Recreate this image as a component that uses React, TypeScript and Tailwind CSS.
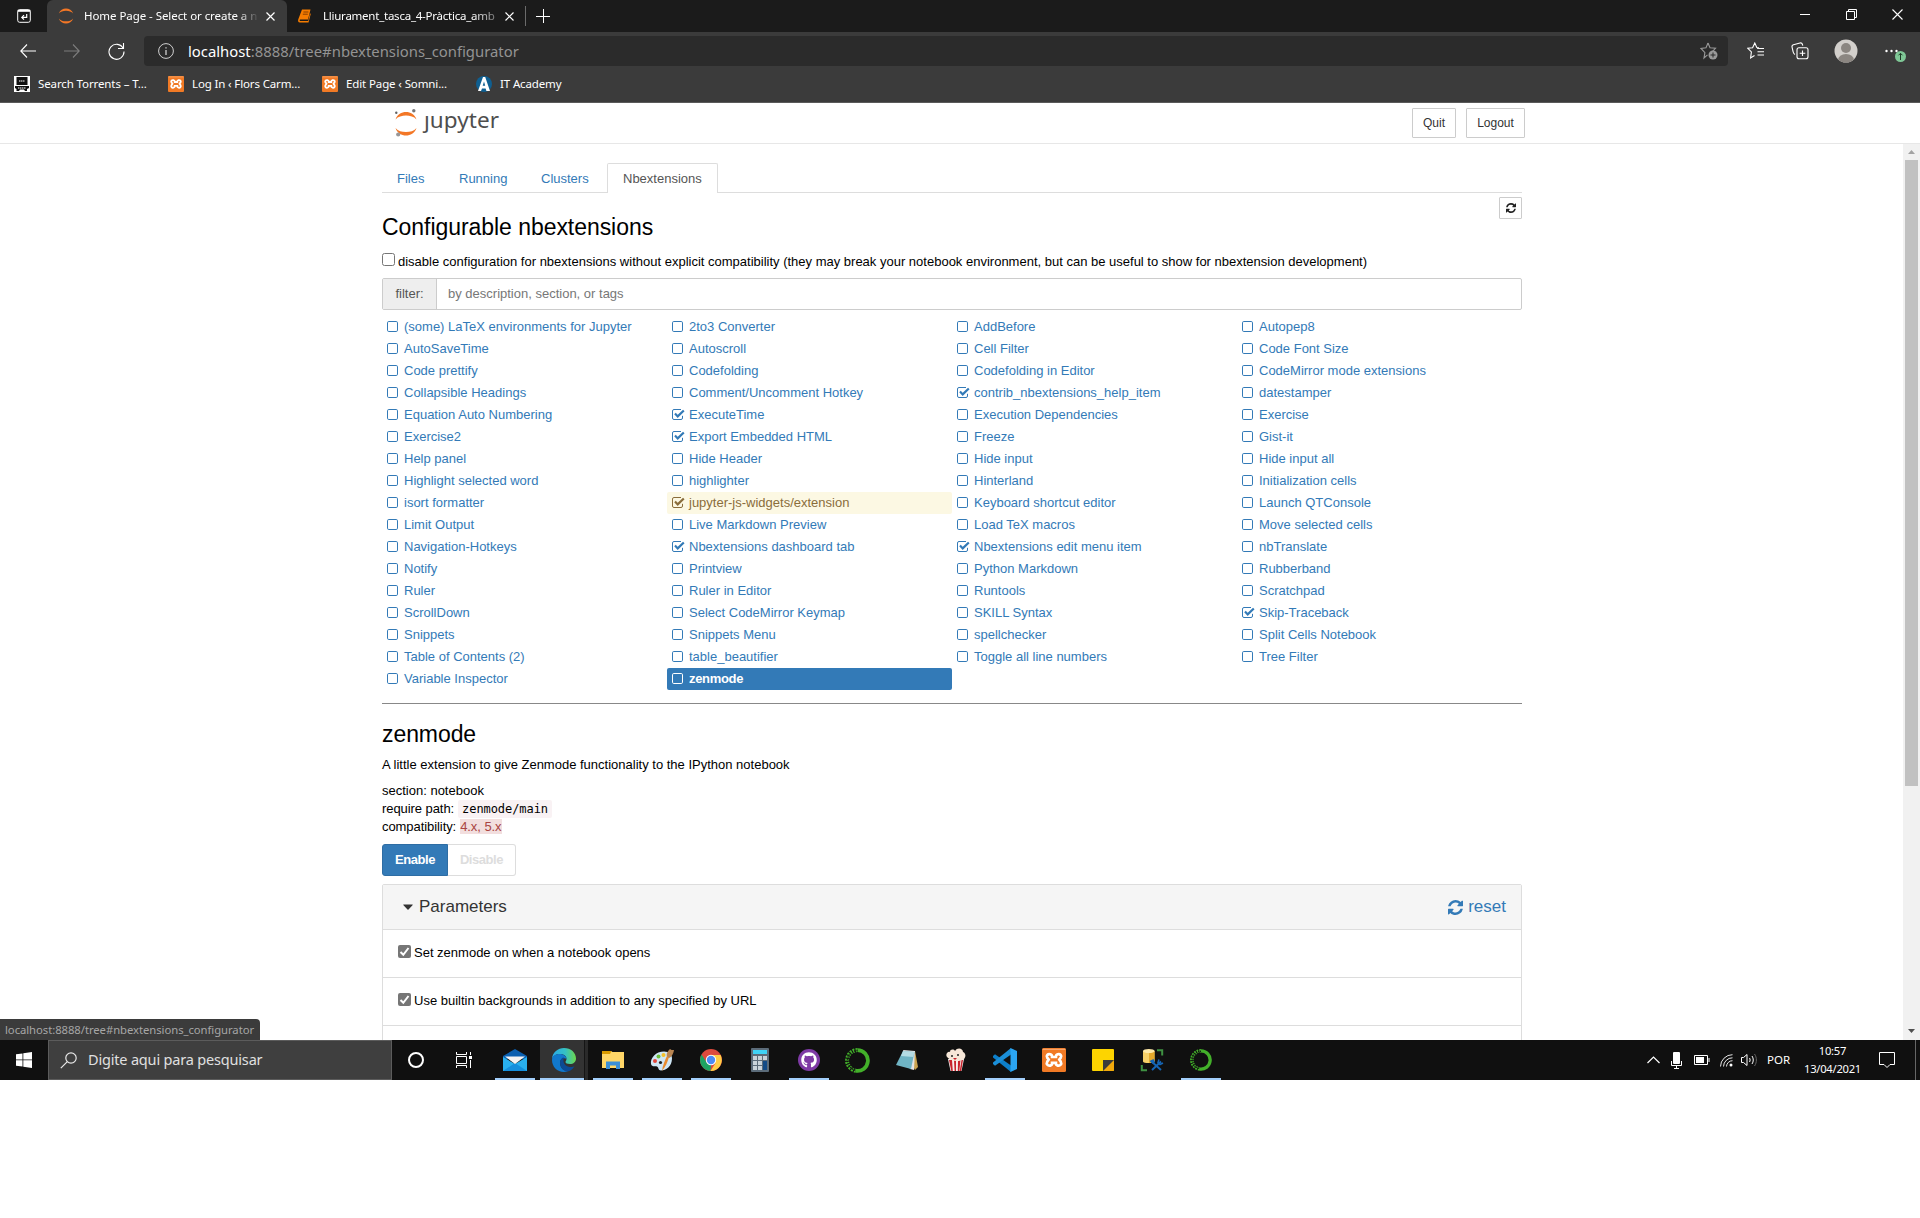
import { ReactNode } from "react";
import { FaGithub } from "react-icons/fa";

function T({ className = "", children }: { className?: string; children: ReactNode }) {
  return <span className={`whitespace-nowrap ${className}`}>{children}</span>;
}

const rows: string[][] = [
  ["(some) LaTeX environments for Jupyter", "2to3 Converter", "AddBefore", "Autopep8"],
  ["AutoSaveTime", "Autoscroll", "Cell Filter", "Code Font Size"],
  ["Code prettify", "Codefolding", "Codefolding in Editor", "CodeMirror mode extensions"],
  ["Collapsible Headings", "Comment/Uncomment Hotkey", "contrib_nbextensions_help_item", "datestamper"],
  ["Equation Auto Numbering", "ExecuteTime", "Execution Dependencies", "Exercise"],
  ["Exercise2", "Export Embedded HTML", "Freeze", "Gist-it"],
  ["Help panel", "Hide Header", "Hide input", "Hide input all"],
  ["Highlight selected word", "highlighter", "Hinterland", "Initialization cells"],
  ["isort formatter", "jupyter-js-widgets/extension", "Keyboard shortcut editor", "Launch QTConsole"],
  ["Limit Output", "Live Markdown Preview", "Load TeX macros", "Move selected cells"],
  ["Navigation-Hotkeys", "Nbextensions dashboard tab", "Nbextensions edit menu item", "nbTranslate"],
  ["Notify", "Printview", "Python Markdown", "Rubberband"],
  ["Ruler", "Ruler in Editor", "Runtools", "Scratchpad"],
  ["ScrollDown", "Select CodeMirror Keymap", "SKILL Syntax", "Skip-Traceback"],
  ["Snippets", "Snippets Menu", "spellchecker", "Split Cells Notebook"],
  ["Table of Contents (2)", "table_beautifier", "Toggle all line numbers", "Tree Filter"],
  ["Variable Inspector", "zenmode"],
];
const enabled = new Set([
  "contrib_nbextensions_help_item", "ExecuteTime", "Export Embedded HTML", "jupyter-js-widgets/extension",
  "Nbextensions dashboard tab", "Nbextensions edit menu item", "Skip-Traceback",
]);

function Box({ on }: { on: boolean }) {
  return (
    <svg width="13" height="12" viewBox="0 0 13 12" fill="none" stroke="currentColor" className="mr-[4px] shrink-0">
      {on ? (
        <>
          <path d="M10.500 6.800V9A1.500 1.500 0 0 1 9 10.500H2A1.500 1.500 0 0 1 .5 9V2A1.500 1.500 0 0 1 2 .5h7" />
          <path d="M3 4.600l2.700 2.800L11.800 1.500" strokeWidth="2.200" />
        </>
      ) : (
        <rect x="0.500" y="0.500" width="10" height="10" rx="1.300" />
      )}
    </svg>
  );
}

function Refresh({ size }: { size: number }) {
  return (
    <svg width={size} height={size} viewBox="0 0 1536 1536" fill="currentColor">
      <path d="M1511 928q0 5-1 7-64 268-268 434.500T764 1536q-146 0-282.500-55T238 1324l-129 129q-19 19-45 19t-45-19-19-45V960q0-26 19-45t45-19h448q26 0 45 19t19 45-19 45l-137 137q71 66 161 102t187 36q134 0 250-65t186-179q11-17 53-117 8-23 30-23h192q13 0 22.500 9.500t9.500 22.500zm25-800v448q0 26-19 45t-45 19h-448q-26 0-45-19t-19-45 19-45l138-138Q969 256 768 256q-134 0-250 65T332 500q-11 17-53 117-8 23-30 23H50q-13 0-22.500-9.500T18 608v-7q65-268 270-434.500T768 0q146 0 284 55.500T1297 212l130-129q19-19 45-19t45 19 19 45z" />
    </svg>
  );
}

function Xampp({ size }: { size: number }) {
  return (
    <svg width={size} height={size} viewBox="0 0 24 24">
      <rect width="24" height="24" rx="1.500" fill="#f17a25" />
      <path d="M.6 2V.8h22.800V2" fill="#f9a56a" />
      <path d="M8.200 6.200c-2.400-.6-4.200 1.600-3 3.400l1.500 2-1.500 2.200c-1.200 2.200.6 4.400 3 3.800 1.400-.4 2-1.600 1.900-2.800h3.800c-.1 1.200.5 2.400 1.900 2.800 2.400.6 4.200-1.600 3-3.800l-1.500-2.200 1.500-2c1.200-1.800-.6-4-3-3.400-1.400.4-2 1.500-1.900 2.800h-3.800c.1-1.300-.5-2.400-1.900-2.800z" fill="none" stroke="#fff" strokeWidth="2.700" />
    </svg>
  );
}

function BrowserChrome() {
  return (
    <div className="h-[103px] bg-[#3b3b3b] border-b border-[#5a5a5a] text-white font-['Noto_Sans','Open_Sans',sans-serif]">
      <div className="h-8 flex bg-[#1b1b1b]">
        <div className="w-[47px] flex items-center pl-[17px]">
          <svg width="14" height="14" viewBox="0 0 14 14" fill="none" stroke="#fff">
            <rect x=".7" y=".7" width="12.600" height="12.600" rx="2" />
            <path d="M.7 1.800h12.600" strokeWidth="2" />
            <path d="M9.700 5v3.400H5M7 6.200L4.800 8.400 7 10.600" strokeWidth="1.200" />
          </svg>
        </div>
        <div className="w-[240px] rounded-t-md bg-[#3b3b3b] flex items-center pl-[11px] text-[12px]">
          <svg width="16" height="16" viewBox="0 0 16 16" className="mr-[10px]">
            <path d="M.8 5.600C2 2.200 5 .6 8 .6s6 1.600 7.200 5C13.500 3.600 11 2.800 8 2.800S2.500 3.600.8 5.600zM.8 10.400c1.200 3.400 4.200 5 7.200 5s6-1.600 7.200-5c-1.700 2-4.200 2.800-7.200 2.800s-5.500-.8-7.200-2.800z" fill="#f37726" />
          </svg>
          <div className="w-[175px] flex text-[11.500px] tracking-[-0.060px] [mask-image:linear-gradient(to_right,black_88%,transparent)]">
            <T>Home Page - Select or create a n</T>
          </div>
          <svg width="9" height="9" viewBox="0 0 9 9" stroke="#fff" strokeWidth="1.200" className="ml-[7px]"><path d="M.5.5l8 8M8.500.5l-8 8" /></svg>
        </div>
        <div className="w-[239px] flex items-center pl-[11px] text-[12px]">
          <svg width="13" height="14" viewBox="0 0 13 14" className="mr-[12px]">
            <path d="M4 .5h8.500L10 10.500H2.200c-.8 0-.8 1.600 0 1.600h8L12 4.500l.8.3-2.300 8.700H1.800C.2 13.500-.3 11.800.4 10z" fill="#f57c00" />
            <path d="M5.400 3h5M4.800 5.200h5" stroke="#7a3800" strokeWidth=".9" />
          </svg>
          <div className="w-[174px] flex text-[11.500px] tracking-[-0.240px] [mask-image:linear-gradient(to_right,black_86%,#0005)]"><T>Lliurament_tasca_4-Pràctica_amb</T></div>
          <svg width="9" height="9" viewBox="0 0 9 9" stroke="#fff" strokeWidth="1.200" className="ml-[8px]"><path d="M.5.5l8 8M8.500.5l-8 8" /></svg>
        </div>
        <div className="flex items-center">
          <div className="w-px h-5 bg-[#6b6b6b] -ml-px" />
          <svg width="14" height="14" viewBox="0 0 14 14" stroke="#fff" className="ml-[10px]"><path d="M7.500 0v14M0 7.500h14" /></svg>
        </div>
        <div className="ml-auto flex w-[138px] h-[29px] items-center justify-between pl-[18px] pr-[17px]">
          <svg width="10" height="10" stroke="#fff"><path d="M0 4.500h10" /></svg>
          <svg width="11" height="11" fill="none" stroke="#fff"><path d="M.5 2.500h8v8h-8zM2.500 2.500v-2h8v8h-2" /></svg>
          <svg width="11" height="11" stroke="#fff" strokeWidth="1.100"><path d="M.5.5l10 10M10.500.5l-10 10" /></svg>
        </div>
      </div>
      <div className="h-[38px] flex items-center">
        <svg width="16" height="14" viewBox="0 0 16 14" fill="none" stroke="#fff" strokeWidth="1.100" className="ml-5"><path d="M7 .5L.8 7 7 13.500M.8 7H16" /></svg>
        <svg width="16" height="14" viewBox="0 0 16 14" fill="none" stroke="#7d7d7d" strokeWidth="1.100" className="ml-7"><path d="M9 .5L15.200 7 9 13.500M15.200 7H0" /></svg>
        <svg width="17" height="17" viewBox="0 0 17 17" fill="none" stroke="#fff" strokeWidth="1.100" className="ml-7"><path d="M15.200 5.400A7.500 7.500 0 1 0 16 8.500M15.500 0v5.500H10" /></svg>
        <div className="ml-[19px] w-[1584px] h-[30px] rounded bg-[#2b2b2b] flex items-center pl-[14px] text-[14.850px] text-[#939393]">
          <svg width="16" height="16" viewBox="0 0 16 16" fill="none" stroke="#d0d0d0" className="mr-[14px]"><circle cx="8" cy="8" r="7.400" /><path d="M8 7v5M8 4.300v1.300" strokeWidth="1.300" /></svg>
          <T className="pt-px"><span className="text-white">localhost</span>:8888/tree#nbextensions_configurator</T>
          <svg width="18" height="18" viewBox="0 0 18 18" fill="none" stroke="#9a9a9a" className="ml-auto mr-[10px]">
            <path d="M8 1l2 4.800 5.500.5-3.500 3.500M7.500 12.800L4 16l.9-5.400L1 6.500l5-.7L8 1" strokeWidth="1.100" />
            <circle cx="13" cy="13" r="4.500" fill="#9a9a9a" stroke="none" /><path d="M13 10.500v5M10.500 13h5" stroke="#2b2b2b" />
          </svg>
        </div>
        <svg width="18" height="18" viewBox="0 0 18 18" fill="none" stroke="#fff" strokeWidth="1.100" className="ml-[19px]">
          <path d="M12 5.800L9.800 5.500 7.800 1 5.600 5.700.8 6.300l3.600 3.600-.8 6L7.500 13.500M10 6.500h7M10.500 9.800h6.500M10.500 13h6.500" />
        </svg>
        <svg width="18" height="18" viewBox="0 0 18 18" fill="none" stroke="#fff" strokeWidth="1.100" className="ml-[26px]">
          <rect x="6" y="5.800" width="11" height="11" rx="2" /><path d="M11.500 8.500v5.600M8.700 11.300h5.600M4 12.500C2.800 12 2.500 11.500 2.200 10L1 5c-.2-1.200.3-2 1.400-2.300L9 1c1.200-.3 2 .2 2.400 1.300l.4 1.400" />
        </svg>
        <svg width="24" height="24" viewBox="0 0 24 24" className="ml-[25px]">
          <clipPath id="av"><circle cx="12" cy="12" r="11.500" /></clipPath>
          <circle cx="12" cy="12" r="11.500" fill="#d2cfcb" />
          <g clipPath="url(#av)" fill="#8b8681"><circle cx="12" cy="9" r="5" /><ellipse cx="12" cy="21" rx="8" ry="6" /></g>
        </svg>
        <svg width="22" height="16" viewBox="0 0 22 16" className="ml-[27px] mt-[6px]">
          <g fill="#fff"><circle cx="1.500" cy="5" r="1.200" /><circle cx="6.500" cy="5" r="1.200" /><circle cx="11.500" cy="5" r="1.200" /></g>
          <circle cx="15.500" cy="10.500" r="5.500" fill="#7fc796" /><path d="M15.500 14V7.500M13.500 9.300l2-2 2 2" fill="none" stroke="#1d3a26" />
        </svg>
      </div>
      <div className="h-[28px] flex items-center text-[11.500px]">
        <svg width="16" height="16" viewBox="0 0 16 16" className="ml-[14px] mr-[8px]">
          <rect width="16" height="16" fill="#fff" /><path d="M2.500 1h11v8h-11zM1 10h14v2l-2 1v2H11l-1-1.500H6L5 15H2.500v-2L1 12z" fill="#111" /><path d="M5 5h6M4 12h8" stroke="#fff" strokeDasharray="1.500 .5" />
        </svg>
        <div className="w-[130px] tracking-[-0.110px]"><T>Search Torrents – T...</T></div>
        <div className="mr-[8px]"><Xampp size={16} /></div>
        <div className="w-[130px] tracking-[-0.140px]"><T>Log In ‹ Flors Carm...</T></div>
        <div className="mr-[8px]"><Xampp size={16} /></div>
        <div className="w-[130px] tracking-[-0.120px]"><T>Edit Page ‹ Somni...</T></div>
        <svg width="16" height="16" viewBox="0 0 16 16" className="mr-[8px]">
          <circle cx="8" cy="8" r="8" fill="#0f5f91" /><path d="M2 15L7 1h2.200L14 15h-3.600l-.8-2.600H6L5 15z" fill="#fff" /><path d="M6.700 9.800L8 5.500l1.200 4.300z" fill="#0f5f91" />
        </svg>
        <T className="tracking-[-0.130px]">IT Academy</T>
      </div>
    </div>
  );
}

function Extensions() {
  return (
    <div className="mt-[6px] grid grid-cols-4 text-[#337ab7]">
      {rows.flat().map((n) => (
        <a
          key={n}
          className={`h-[22px] rounded-[2px] flex items-center pl-[5px] whitespace-nowrap ${
            n === "zenmode"
              ? "bg-[#337ab7] text-white font-bold tracking-[-0.330px]"
              : n === "jupyter-js-widgets/extension"
                ? "bg-[#fcf8e3] text-[#8a6d3b]"
                : ""
          }`}
        >
          <Box on={enabled.has(n)} />
          <T>{n}</T>
        </a>
      ))}
    </div>
  );
}

function Check() {
  return (
    <svg width="13" height="13" viewBox="0 0 13 13" className="mr-[3px] mb-[3px]">
      <rect width="13" height="13" rx="2" fill="#767676" /><path d="M2.500 7l2.800 2.800L10.500 3" fill="none" stroke="#fff" strokeWidth="2" />
    </svg>
  );
}

function Page() {
  return (
    <div className="h-[937px] overflow-hidden bg-white text-black text-[13px] font-['Liberation_Sans',Arial,sans-serif]">
      <header className="h-[41px] border-b border-[#e7e7e7] flex items-start pl-[394px] pr-[395px]">
        <svg width="120" height="38" viewBox="0 0 120 38" className="mt-px">
          <path d="M1.500 15.500C3.500 10 7.500 8 12 8s8.500 2 10.500 7.500C20 12.500 16 11.500 12 11.500S4 12.500 1.500 15.500zM1.500 24c2 5.500 6 7.500 10.500 7.500s8.500-2 10.500-7.500c-2.500 3-6.500 4-10.500 4S4 27 1.500 24z" fill="#f37726" />
          <circle cx="2.300" cy="8.800" r="1.200" fill="#616262" /><circle cx="19.800" cy="6.700" r="1.700" fill="#767677" /><circle cx="4.200" cy="30.500" r="2.100" fill="#989798" />
          <text x="30" y="24" fontFamily="Noto Sans" fontSize="22.500" fill="#4e4e4e" textLength="75">ȷupyter</text>
        </svg>
        <div className="ml-auto flex gap-[10px] mt-[5px] text-[12px] text-[#333]">
          <button className="w-[44px] h-[30px] border border-[#ccc] rounded-[1px]">Quit</button>
          <button className="w-[59px] h-[30px] border border-[#ccc] rounded-[1px]">Logout</button>
        </div>
      </header>
      <div className="flex h-[896px]">
        <main className="ml-[382px] w-[1140px]">
          <nav className="mt-[19px] h-[30px] border-b border-[#ddd] flex text-[#337ab7]">
            <a className="pl-[15px] h-[30px] leading-[31px] w-[62px]"><T>Files</T></a>
            <a className="pl-[15px] h-[30px] leading-[31px] w-[82px]"><T>Running</T></a>
            <a className="pl-[15px] h-[30px] leading-[31px] w-[81px]"><T>Clusters</T></a>
            <a className="pl-[15px] h-[30px] leading-[29px] w-[111px] border border-b-0 border-[#ddd] rounded-t-[2px] bg-white text-[#555]"><T>Nbextensions</T></a>
          </nav>
          <div className="flex justify-end mt-[4px]">
            <button className="w-[23px] h-[22px] border border-[#ccc] rounded-[1px] text-[#222] grid place-items-center"><Refresh size={10} /></button>
          </div>
          <h2 className="text-[23px] leading-[26px] -mt-[5px] tracking-[-0.050px]"><T>Configurable nbextensions</T></h2>
          <div className="flex items-center h-[18px] mt-[12px]">
            <span className="size-[13px] border border-[#767676] rounded-[2.500px] mr-[3px] mb-[3px]" />
            <T className="pt-[2px]">disable configuration for nbextensions without explicit compatibility (they may break your notebook environment, but can be useful to show for nbextension development)</T>
          </div>
          <div className="mt-[8px] h-[32px] border border-[#ccc] rounded-[2px] flex items-center text-[#777]">
            <div className="w-[54px] h-full bg-[#eee] border-r border-[#ccc] grid place-items-center text-[#555]"><T>filter:</T></div>
            <div className="pl-[11px]"><T>by description, section, or tags</T></div>
          </div>
          <Extensions />
          <hr className="mt-[13px] border-[#888]" />
          <h3 className="mt-[17px] text-[23px] leading-[26px] tracking-[-0.080px]"><T>zenmode</T></h3>
          <p className="mt-[9px] leading-[18px]"><T>A little extension to give Zenmode functionality to the IPython notebook</T></p>
          <p className="mt-[8px] leading-[18px]"><T>section: notebook</T></p>
          <p className="leading-[18px] h-[18px] flex items-center tracking-[-0.070px]"><T>require path:</T><code className="ml-[4px] px-[4px] bg-[#f9f2f4] rounded-[2px] text-[12px] font-['DejaVu_Sans_Mono',monospace]"><T>zenmode/main</T></code></p>
          <p className="leading-[18px] h-[18px] flex items-center tracking-[-0.070px]"><T>compatibility:</T><span className="ml-[4px] mb-px leading-[15px] bg-[#f2dede] text-[#a94442]"><T>4.x, 5.x</T></span></p>
          <div className="mt-[8px] flex h-[32px] font-bold text-center leading-[30px] tracking-[-0.440px]">
            <button className="w-[66px] rounded-l-[3px] bg-[#337ab7] border border-[#2e6da4] text-white"><T>Enable</T></button>
            <button className="w-[68px] rounded-r-[3px] border border-l-0 border-[#ddd] text-[#ddd]"><T>Disable</T></button>
          </div>
          <section className="mt-[8px] border border-[#ddd] rounded-t-[2px]">
            <div className="h-[45px] bg-[#f5f5f5] border-b border-[#ddd] flex items-center pl-[20px] pr-[15px] text-[17px] text-[#333]">
              <svg width="10" height="6" viewBox="0 0 10 6" fill="currentColor" className="mr-[6px]"><path d="M.5.5h9q.5.3 0 .8L5.500 5.500q-.5.500-1 0L.5 1.300Q0 .8.5.5z" /></svg>
              <T>Parameters</T>
              <a className="ml-auto flex items-center gap-[5px] text-[#337ab7]"><Refresh size={15} /><T>reset</T></a>
            </div>
            <div className="h-[48px] border-b border-[#ddd] flex items-center pl-[15px] pb-[2px]"><Check /><T>Set zenmode on when a notebook opens</T></div>
            <div className="h-[48px] border-b border-[#ddd] flex items-center pl-[15px] pb-[2px]"><Check /><T>Use builtin backgrounds in addition to any specified by URL</T></div>
            <div className="h-[48px]" />
          </section>
        </main>
        <aside className="ml-auto w-[17px] bg-[#f1f1f1] flex flex-col items-center">
          <svg width="17" height="16"><path d="M5 10l3.500-4 3.500 4z" fill="#a3a3a3" /></svg>
          <div className="w-[13px] h-[626px] bg-[#c1c1c1]" />
          <svg width="17" height="17" className="mt-auto"><path d="M5 6l3.500 4L12 6z" fill="#505050" /></svg>
        </aside>
      </div>
    </div>
  );
}

function Anaconda({ size }: { size: number }) {
  return (
    <svg width={size} height={size} viewBox="0 0 24 24" fill="none" stroke="#43b02a">
      <path d="M12 2a10 10 0 1 1-2 19.800" strokeWidth="3.600" />
      <path d="M12 2A10 10 0 0 0 10 21.800" strokeWidth="3.800" strokeDasharray="1.800 1" />
      <path d="M12 2.500A9.500 9.500 0 0 0 10 21.300" strokeWidth="1.500" strokeDasharray="1 1.200" stroke="#101010" />
    </svg>
  );
}

const apps: { name: string; open?: boolean; active?: boolean; icon: ReactNode }[] = [
  { name: "mail", open: true, icon: (
    <svg width="24" height="24" viewBox="0 0 24 24"><path d="M0 8L12 1l12 7v3H0z" fill="#0a5fb0" /><path d="M0 9l12 7 12-7v14H0z" fill="#29b0ee" /><path d="M0 23L12 15l12 8z" fill="#158fdc" /><path d="M2 8.500h20L12 16z" fill="#f3f3f3" /></svg>) },
  { name: "edge", open: true, active: true, icon: (
    <svg width="24" height="24" viewBox="0 0 24 24">
      <defs><linearGradient id="eg"><stop offset="0" stopColor="#2aa9e8" /><stop offset=".55" stopColor="#35c1c4" /><stop offset="1" stopColor="#6cd84c" /></linearGradient></defs>
      <path d="M0 11C.5 4 6 0 12 0c7 0 12 4.800 12 10.500 0 3.500-2.600 5.500-6 5.500-3 0-4.500-1-4.500-2s1-1.300 1-3.200C14.500 8 11.500 6 8 6c-4 0-7 2-8 5z" fill="url(#eg)" />
      <path d="M0 12c0-4 3.500-6 7.500-6 3.500 0 7 2 7 5C13 9.500 8 10 8 15c0 5 4 8 8 8.300-1.200.5-2.500.7-4 .7C5 24 0 18.500 0 12z" fill="#1178cc" />
      <path d="M8 14.500c0-3 2-5 4-5-1 2-1.500 8 5.500 9.500 2 .3 4-.3 5-.8C20.500 21.500 17.500 23.500 14.500 23.500 11 22.500 8 19 8 14.500z" fill="#0c4a94" />
    </svg>) },
  { name: "files", open: true, icon: (
    <svg width="22" height="20" viewBox="0 0 22 20"><path d="M0 1h9l1.500 1H22v16H0z" fill="#ffd667" /><path d="M0 1h9.500L8 4H0z" fill="#d99a00" /><path d="M4 11.500h14V19h-4v-3.500H8V19H4z" fill="#3c8fd6" /></svg>) },
  { name: "paint", open: true, icon: (
    <svg width="24" height="24" viewBox="0 0 24 24"><path d="M1 16C0 10 6 3.500 14 3.500c5 0 8 3 8 7 0 8-6 12-11 12-3 0-2-3-4-4s-5 1-6-2.500z" fill="#cfe6f5" /><circle cx="5" cy="13" r="2" fill="#e2473c" /><circle cx="8.500" cy="8.500" r="2" fill="#6abf3b" /><circle cx="13.500" cy="7" r="2" fill="#f4c02a" /><circle cx="10.500" cy="14.500" r="1.600" fill="#1c1c1c" /><path d="M12 23c.5-5 3-11 5-15l2 1c-1.500 5-3.500 10-7 14z" fill="#e98a2d" /><path d="M17 8.500c-1-3 1-5.500 3-7.500 1 1 2 1 4 1-.5 3-2 7-5 8z" fill="#b98552" /></svg>) },
  { name: "chrome", open: true, icon: (
    <svg width="22" height="22" viewBox="0 0 22 22"><circle cx="11" cy="11" r="11" fill="#dd4b3e" /><path d="M1.500 5.500L6.700 13.500 11 16 10.500 22A11 11 0 0 1 1.500 5.500z" fill="#1da462" /><path d="M20.600 6H11l4.500 8L10.500 22A11 11 0 0 0 20.600 6z" fill="#ffcd46" /><circle cx="11" cy="11" r="5.200" fill="#fff" /><circle cx="11" cy="11" r="4.200" fill="#4c8bf5" /></svg>) },
  { name: "calculator", icon: (
    <svg width="18" height="24" viewBox="0 0 18 24"><rect width="18" height="24" rx="1" fill="#5b6b79" /><rect x="2" y="2" width="14" height="4" fill="#3fd3f7" /><path d="M2 8h4v4H2zM7 8h4v4H7zM12 8h4v4h-4zM2 13h4v4H2zM7 13h4v4H7zM2 18h4v4H2zM7 18h4v4H7z" fill="#c9d3da" /><path d="M12 13h4v9h-4z" fill="#134b86" /></svg>) },
  { name: "github", open: true, icon: (
    <div className="size-[22px] rounded-full bg-[#7e3aa5] grid place-items-center"><FaGithub className="size-[16px] text-white" /></div>) },
  { name: "anaconda", icon: <Anaconda size={25} /> },
  { name: "notepad", icon: (
    <svg width="24" height="24" viewBox="0 0 24 24"><path d="M20 3l3 16-3 3-2-4z" fill="#c9a24e" /><path d="M8 2l12 1-1 19-4-1z" fill="#e3e3e3" /><path d="M8 3l11.500 1L16 21 1 17z" fill="#6fb4c4" /><path d="M8 3l11.500 1-1.200 5L6 8z" fill="#b4dbe3" /></svg>) },
  { name: "popcorn", icon: (
    <svg width="20" height="24" viewBox="0 0 20 24"><path d="M2 11l2.500 12h11L18 11z" fill="#f6f0ee" /><path d="M3 12l2.300 11h1.500L6 12zM8 12l.6 11h1.400V12zM12 12l-.2 11h1.500L14.500 12zM17 12h-1.500l-1.800 11h1.500z" fill="#c8232c" /><path d="M1 9c-2-3 1-6 3-5 0-3 4-3 5-1 2-4 8-3 8 1 3 1 3 5 1 7-4 3-13 3-17-2z" fill="#f7e7d8" /><circle cx="6" cy="8" r="1" fill="#222" /><circle cx="12" cy="7" r="1" fill="#222" /><path d="M7 10h4l-2 2z" fill="#c8232c" /></svg>) },
  { name: "vscode", open: true, icon: (
    <svg width="24" height="24" viewBox="0 0 24 24"><path d="M0 8l2-1.800 16 11.300V24L0 9.500z" fill="#0d7fc9" /><path d="M0 16l2 1.800L18 6.500V0L0 14.500z" fill="#1b8fd8" /><path d="M17.500 0L24 3v18l-6.500 3z" fill="#2ba5f2" /></svg>) },
  { name: "xampp", icon: <Xampp size={24} /> },
  { name: "notes", icon: (
    <svg width="22" height="22" viewBox="0 0 22 22"><rect width="22" height="22" rx="1" fill="#fdd400" /><path d="M11 22V11h11v10l-1 1z" fill="#f2a90c" /><path d="M11 22V11h11z" fill="#3b3b3b" /></svg>) },
  { name: "database", icon: (
    <svg width="24" height="24" viewBox="0 0 24 24"><path d="M3 3v10.500c0 2 11.500 2 11.500 0V3z" fill="#f7d067" /><path d="M9 3v12c3 0 5.500-.5 5.500-1.500V3z" fill="#e5a92b" /><ellipse cx="8.800" cy="3" rx="5.800" ry="2" fill="#ffe9a8" /><path d="M17 2.200h5.200V7.500M1.800 17v5.200H7" fill="none" stroke="#3f9142" strokeWidth="2" /><path d="M12 22l9-8.500M11 13l10 9" stroke="#1565b5" strokeWidth="2" /><path d="M9.500 13l4-2 1.500 3-2 2z" fill="#1565b5" /><path d="M19 11.500l-1 3 2 2 3-1.500" fill="none" stroke="#1565b5" strokeWidth="1.600" /></svg>) },
  { name: "navigator", open: true, icon: <Anaconda size={22} /> },
];

function Taskbar() {
  return (
    <div className="h-[40px] bg-[#101010] flex items-center text-white font-['Noto_Sans','Open_Sans',sans-serif]">
      <div className="w-[48px] grid place-items-center">
        <svg width="16" height="16" viewBox="0 0 16 16" fill="#fff"><path d="M0 2.300L6.500 1.400V7.500H0zM7.300 1.300L16 0v7.500H7.300zM0 8.300h6.500v6.300L0 13.700zM7.300 8.300H16V16l-8.700-1.300z" /></svg>
      </div>
      <div className="w-[344px] h-[40px] bg-[#3f3f3f] border border-[#5c5c5c] flex items-center pl-[11px] text-[14.500px] text-[#e0e0e0]">
        <svg width="17" height="17" viewBox="0 0 17 17" fill="none" stroke="#e8e8e8" strokeWidth="1.200" className="mr-[11px]"><circle cx="11" cy="6" r="5.200" /><path d="M7.300 9.700L.8 16.200" /></svg>
        <T className="tracking-[-0.180px]">Digite aqui para pesquisar</T>
      </div>
      <div className="w-[48px] grid place-items-center"><div className="size-[16px] rounded-full border-2 border-white" /></div>
      <div className="w-[50px] pl-[16px]">
        <svg width="16" height="16" viewBox="0 0 16 16" fill="none" stroke="#fff"><path d="M.5 0v2.500h10V0M.5 16v-2.500h10V16M.5 4.500h10v7H.5zM14.500 0v3M14.500 8v8" /><path d="M13 4h3v3h-3z" fill="#fff" stroke="none" /></svg>
      </div>
      {apps.map((a) => (
        <div key={a.name} className={`w-[49px] h-[40px] relative grid place-items-center ${a.active ? "bg-[linear-gradient(to_right,#101010_1px,#333_1px,#333_45px,#151515_45px,#151515_46px,#2a2a2a_46px)]" : ""}`}>
          {a.icon}
          {a.open && <div className={`absolute bottom-0 h-[2px] bg-[#a3cffb] ${a.active ? "left-px w-[44px]" : "left-[5px] w-[40px]"}`} />}
        </div>
      ))}
      <div className="ml-auto flex items-center h-[40px]">
        <svg width="13" height="8" viewBox="0 0 13 8" fill="none" stroke="#fff" strokeWidth="1.200"><path d="M.5 7l6-6 6 6" /></svg>
        <svg width="11" height="17" viewBox="0 0 11 17" fill="none" stroke="#fff" className="ml-[11px]"><rect x="2" y="0" width="7" height="12" rx="1" fill="#fff" stroke="none" /><path d="M.5 9v4.500h10V9M5.500 13.500v3M3 16.500h5" /></svg>
        <svg width="16" height="10" viewBox="0 0 16 10" fill="none" stroke="#fff" className="ml-[12px]"><path d="M.5.5h13v9H.5zM15 3v4" /><path d="M2 2h8v6H2z" fill="#fff" stroke="none" /></svg>
        <svg width="13" height="13" viewBox="0 0 13 13" fill="none" stroke="#fff" className="ml-[10px]"><path d="M.5 12.500A12 12 0 0 1 12.500.7M3.500 12.500a9 9 0 0 1 9-8.700M6.500 12.500a6 6 0 0 1 6-5.800" strokeWidth=".9" /><circle cx="11" cy="11" r="1.500" fill="#fff" stroke="none" /></svg>
        <svg width="17" height="14" viewBox="0 0 17 14" fill="none" stroke="#fff" className="ml-[8px]"><path d="M.5 4.500h2L6 1.500v11L2.500 9.500h-2zM8.500 5c.8 1.200.8 2.800 0 4M11 3c1.700 2.400 1.700 5.600 0 8" /><path d="M13.500 1c2.500 3.500 2.500 8.500 0 12" stroke="#666" /></svg>
        <div className="w-[46px] pl-[9px] text-[11.500px] leading-[16px]"><T>POR</T></div>
        <div className="w-[57px] flex flex-col items-center text-[11.200px] leading-[18px] tracking-[-0.260px]"><T>10:57</T><T>13/04/2021</T></div>
        <svg width="16" height="17" viewBox="0 0 16 17" fill="none" stroke="#fff" className="ml-[18px]"><path d="M.5.5h15v12H11l-3 3-3-3H.5z" /></svg>
        <div className="ml-[20px] mr-[4px] w-px h-[40px] bg-[#666]" />
      </div>
    </div>
  );
}

export default function App() {
  return (
    <div className="w-[1920px] h-[1218px] overflow-hidden bg-white">
      <BrowserChrome />
      <div className="relative">
        <Page />
        <div className="absolute left-0 bottom-0 w-[260px] h-[21px] rounded-tr bg-[#3b3b3b] text-[#a6a6a6] text-[11.300px] leading-[21px] pl-[5px] tracking-[-0.060px] font-['Noto_Sans','Open_Sans',sans-serif]">
          <T>localhost:8888/tree#nbextensions_configurator</T>
        </div>
      </div>
      <Taskbar />
    </div>
  );
}
